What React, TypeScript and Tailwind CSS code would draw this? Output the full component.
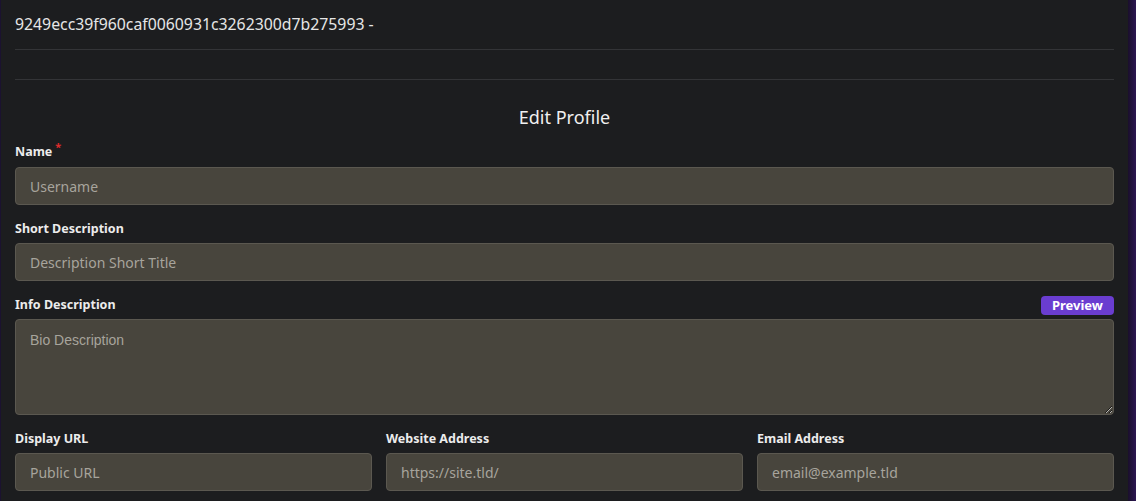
import React from "react";

const inputCls =
  "w-full h-[38px] rounded-[4px] border border-[#5b5850] bg-[#48453d] px-[14px] text-[14px] text-[#e0ddd5] placeholder-[#a7a49c] outline-none";

function Label({ children, req }: { children: React.ReactNode; req?: boolean }) {
  return (
    <div className="text-[12.5px] font-bold text-[#ececec] leading-[16px] flex items-start">
      <span>{children}</span>
      {req && <span className="text-[#e02c2c] text-[11px] leading-[10px] ml-[3px] -mt-[2px]">*</span>}
    </div>
  );
}

export default function App() {
  return (
    <div
      className="w-[1136px] h-[501px] overflow-hidden flex bg-[#1d1330]"
      style={{ fontFamily: '"Noto Sans", "Open Sans", sans-serif' }}
    >
      <div className="w-[1px] bg-[#1b1230]" />
      <div className="w-[1127px] bg-[#1c1d1f] px-[14px] flex flex-col">
        <div className="h-[50px] border-b border-[#333437] pt-[13px] text-[15.8px] text-[#e6e6e6] leading-[22px]">
          9249ecc39f960caf0060931c3262300d7b275993 -
        </div>
        <div className="h-[30px] border-b border-[#333437]" />
        <div className="pt-[25px] text-center text-[18px] text-[#f0f0f0] leading-[24px]">Edit Profile</div>
        <div className="mt-[15px]">
          <Label req>Name</Label>
          <div className="mt-[7px]">
            <input className={inputCls} placeholder="Username" />
          </div>
        </div>
        <div className="mt-[16px]">
          <Label>Short Description</Label>
          <div className="mt-[6px]">
            <input className={inputCls} placeholder="Description Short Title" />
          </div>
        </div>
        <div className="mt-[15px]">
          <div className="flex items-end justify-between">
            <Label>Info Description</Label>
            <span className="mb-[-2px] rounded-[4px] bg-[#6a3dd0] px-[11px] text-[13px] font-bold leading-[19px] text-white">
              Preview
            </span>
          </div>
          <div className="mt-[6px]">
            <textarea
              className="block w-full h-[96px] rounded-[4px] border border-[#5b5850] bg-[#48453d] px-[14px] py-[10px] text-[14px] text-[#e0ddd5] placeholder-[#a7a49c] outline-none"
              style={{ fontFamily: '"Liberation Sans", Arial, sans-serif' }}
              placeholder="Bio Description"
            />
          </div>
        </div>
        <div className="mt-[16px] grid grid-cols-3 gap-[14px]">
          <div>
            <Label>Display URL</Label>
            <div className="mt-[6px]">
              <input className={inputCls} placeholder="Public URL" />
            </div>
          </div>
          <div>
            <Label>Website Address</Label>
            <div className="mt-[6px]">
              <input className={inputCls} placeholder="https://site.tld/" />
            </div>
          </div>
          <div>
            <Label>Email Address</Label>
            <div className="mt-[6px]">
              <input className={inputCls} placeholder="email@example.tld" />
            </div>
          </div>
        </div>
      </div>
      <div className="flex-1 bg-gradient-to-r from-[#1a0f2c] to-[#2c1652]" />
    </div>
  );
}
